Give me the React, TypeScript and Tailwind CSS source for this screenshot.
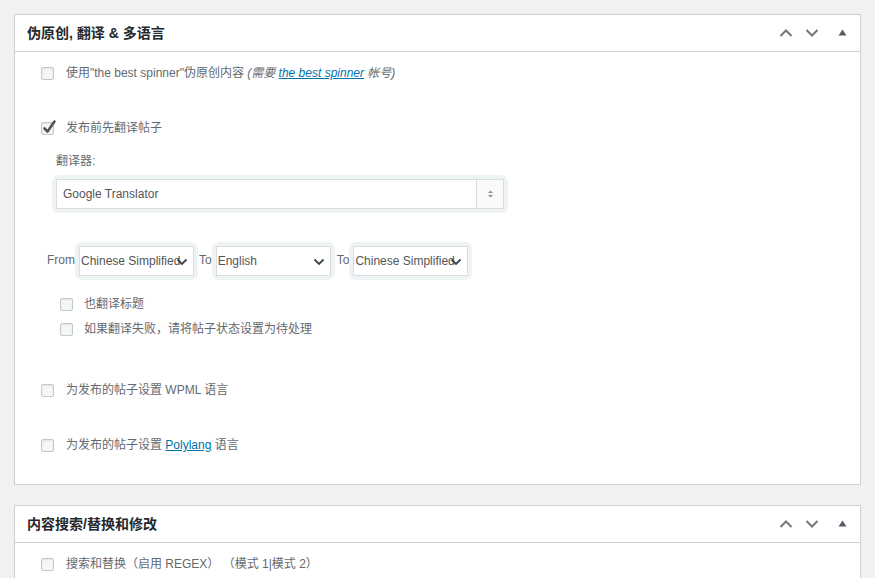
import React from "react";

const FONT = { fontFamily: '"Liberation Sans", Arial, "Noto Sans CJK SC", sans-serif' };

function Checkbox({ checked = false }: { checked?: boolean }) {
  return (
    <span className="relative inline-block w-[13px] h-[13px] shrink-0 rounded-[2px] border border-[#c3c8cc] bg-[#f4f7f8] shadow-[inset_0_1px_2px_rgba(0,0,0,0.08)]">
      {checked && (
        <svg className="absolute left-[0px] top-[-4px]" width="15" height="16" viewBox="0 0 15 16">
          <path d="M2.5 9.5 L5.5 12.5 L12.5 2.5" fill="none" stroke="#4f5458" strokeWidth="2.6" strokeLinecap="round" strokeLinejoin="round" />
        </svg>
      )}
    </span>
  );
}

function Header({ title }: { title: string }) {
  return (
    <div className="h-[37px] border-b border-[#ccd0d4] flex items-center pl-[12px] pr-[13px]">
      <span className="text-[14px] font-bold text-[#23282d]" style={FONT}>{title}</span>
      <div className="ml-auto flex items-center">
        <svg width="14" height="10" viewBox="0 0 14 10" className="mr-[12px]">
          <path d="M1.5 8 L7 2.5 L12.5 8" fill="none" stroke="#72777c" strokeWidth="2" />
        </svg>
        <svg width="14" height="10" viewBox="0 0 14 10" className="mr-[19px]">
          <path d="M1.5 2 L7 7.5 L12.5 2" fill="none" stroke="#72777c" strokeWidth="2" />
        </svg>
        <svg width="9" height="7" viewBox="0 0 9 7" className="mb-[1px]">
          <path d="M0.5 6.5 L4.5 0.5 L8.5 6.5 Z" fill="#555d66" />
        </svg>
      </div>
    </div>
  );
}

function Row({ children, pl = "pl-[26px]", className = "" }: { children: React.ReactNode; pl?: string; className?: string }) {
  return (
    <div className={`h-[22px] flex items-center ${pl} ${className}`}>{children}</div>
  );
}

function SmallSelect({ value }: { value: string }) {
  return (
    <div className="rounded-[3px] shadow-[0_0_0_4px_#eef3f6] mx-[1px]">
      <div className="relative w-[115px] h-[30px] border border-[#dcdcdc] bg-white flex items-center overflow-hidden">
        <span className="pl-[1px] text-[12px] text-[#555] whitespace-nowrap">{value}</span>
        <svg className="absolute right-[5px] top-[11px]" width="12" height="8" viewBox="0 0 12 8">
          <path d="M1.5 1.5 L6 6 L10.5 1.5" fill="none" stroke="#3c434a" strokeWidth="1.8" />
        </svg>
      </div>
    </div>
  );
}

export default function App() {
  return (
    <div className="min-h-[578px] w-[875px] bg-[#f1f1f1] pt-[14px] pl-[14px] overflow-hidden text-[#555]" style={FONT}>
      {/* Panel 1 */}
      <div className="w-[847px] bg-white border border-[#ccd0d4]">
        <Header title="伪原创, 翻译 & 多语言" />
        <div className="pt-[10px] pb-[28px] text-[12px]">
          <Row>
            <Checkbox />
            <span className="ml-[12px] text-[#646970]">
              使用"the best spinner"伪原创内容 <i>(需要 <a className="text-[#0073aa] underline">the best spinner</a> 帐号)</i>
            </span>
          </Row>
          <Row className="mt-[33px]">
            <Checkbox checked />
            <span className="ml-[12px] text-[#646970]">发布前先翻译帖子</span>
          </Row>
          <div className="mt-[13px] h-[18px] flex items-center pl-[41px] text-[#646970]">翻译器:</div>
          <div className="mt-[9px] ml-[41px] w-[448px] rounded-[3px] shadow-[0_0_0_4px_#eef3f6]">
            <div className="h-[30px] border border-[#dcdcdc] bg-white flex items-stretch">
              <div className="flex-1 flex items-center pl-[6px] text-[12px] text-[#555]">Google Translator</div>
              <div className="w-[27px] border-l border-[#dcdcdc] bg-[#fafafa] flex items-center justify-center">
                <svg width="7" height="10" viewBox="0 0 7 10">
                  <path d="M1 4 L3.5 1.5 L6 4 Z" fill="#8c8f94" />
                  <path d="M1 6 L3.5 8.5 L6 6 Z" fill="#8c8f94" />
                </svg>
              </div>
            </div>
          </div>
          <div className="mt-[37px] h-[30px] flex items-center pl-[32px]">
            <span className="text-[12px] text-[#646970] mr-[3px] mb-[2px]">From</span>
            <SmallSelect value="Chinese Simplified" />
            <span className="text-[12px] text-[#646970] ml-[4px] mr-[3px] mb-[2px]">To</span>
            <SmallSelect value="English" />
            <span className="text-[12px] text-[#646970] ml-[5px] mr-[3px] mb-[2px]">To</span>
            <SmallSelect value="Chinese Simplified" />
          </div>
          <Row pl="pl-[45px]" className="mt-[17px]">
            <Checkbox />
            <span className="ml-[11px] text-[#646970]">也翻译标题</span>
          </Row>
          <Row pl="pl-[45px]" className="mt-[3px]">
            <Checkbox />
            <span className="ml-[11px] text-[#646970]">如果翻译失败，请将帖子状态设置为待处理</span>
          </Row>
          <Row className="mt-[39px]">
            <Checkbox />
            <span className="ml-[12px] text-[#646970]">为发布的帖子设置 WPML 语言</span>
          </Row>
          <Row className="mt-[33px]">
            <Checkbox />
            <span className="ml-[12px] text-[#646970]">
              为发布的帖子设置 <a className="text-[#0073aa] underline">Polylang</a> 语言
            </span>
          </Row>
        </div>
      </div>

      {/* Panel 2 */}
      <div className="mt-[20px] w-[847px] bg-white border border-[#ccd0d4] border-b-0">
        <Header title="内容搜索/替换和修改" />
        <div className="pt-[10px] pb-[10px] text-[12px]">
          <Row>
            <Checkbox />
            <span className="ml-[12px] text-[#646970]">搜索和替换（启用 REGEX） （模式 1|模式 2）</span>
          </Row>
        </div>
      </div>
    </div>
  );
}
